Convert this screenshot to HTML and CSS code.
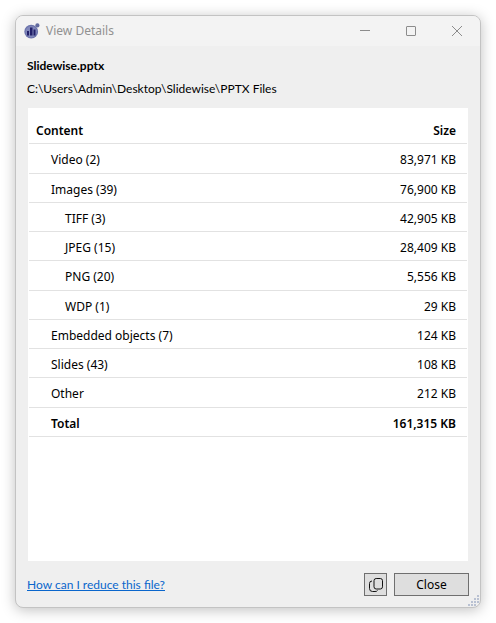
FILE: index.html
```html
<!DOCTYPE html>
<html lang="en">
<head>
  <meta charset="UTF-8" />
  <meta name="viewport" content="width=device-width, initial-scale=1.0"/>
  <title>View Details</title>
  <link rel="stylesheet" href="styles.css">
</head>
<body>

  <div class="window">

    <!-- Title Bar -->
    <header class="titlebar">
      <svg class="app-icon" width="16" height="16" viewBox="0 0 16 16">
        <circle cx="7.2" cy="8.7" r="6.9" fill="#6c74ac"/>
        <circle cx="7.2" cy="8.7" r="5.7" fill="#8087ba"/>
        <circle cx="13.4" cy="2.4" r="2.1" fill="#626b9f"/>
        <path d="M3 8h2v4.500h-2zM6 4.500h2.500v8h-2.500zM9.500 6.500h2v6h-2z" fill="#22206a"/>
      </svg>
      <h1>View Details</h1>
      <div class="window-buttons">
        <button type="button" aria-label="Minimize">
          <svg width="12" height="12" viewBox="0 0 12 12"><path d="M1 5.500h10"/></svg>
        </button>
        <button type="button" aria-label="Maximize">
          <svg width="12" height="12" viewBox="0 0 12 12"><rect x="1.500" y="1.500" width="9" height="9" rx="0.500"/></svg>
        </button>
        <button type="button" aria-label="Close window">
          <svg width="12" height="12" viewBox="0 0 12 12"><path d="M1 1l10 10M11 1L1 11"/></svg>
        </button>
      </div>
    </header>

    <!-- File Info -->
    <main class="content">
      <h2>Slidewise.pptx</h2>
      <p class="path">C:\Users\Admin\Desktop\Slidewise\PPTX Files</p>

      <!-- Size Table -->
      <div class="panel">
        <table>
          <thead>
            <tr><th scope="col">Content</th><th scope="col">Size</th></tr>
          </thead>
          <tbody>
            <tr class="level-1"><td>Video (2)</td><td>83,971 KB</td></tr>
            <tr class="level-1"><td>Images (39)</td><td>76,900 KB</td></tr>
            <tr class="level-2"><td>TIFF (3)</td><td>42,905 KB</td></tr>
            <tr class="level-2"><td>JPEG (15)</td><td>28,409 KB</td></tr>
            <tr class="level-2"><td>PNG (20)</td><td>5,556 KB</td></tr>
            <tr class="level-2"><td>WDP (1)</td><td>29 KB</td></tr>
            <tr class="level-1"><td>Embedded objects (7)</td><td>124 KB</td></tr>
            <tr class="level-1"><td>Slides (43)</td><td>108 KB</td></tr>
            <tr class="level-1"><td>Other</td><td>212 KB</td></tr>
            <tr class="level-1 total"><td>Total</td><td>161,315 KB</td></tr>
          </tbody>
        </table>
      </div>
    </main>

    <!-- Footer -->
    <footer class="footer">
      <a href="#">How can I reduce this file?</a>
      <button type="button" class="btn btn-copy" aria-label="Copy">
        <svg width="16" height="16" viewBox="0 0 16 16">
          <rect x="6" y="1.500" width="8.500" height="10.500" rx="2.200"/>
          <path d="M4 4Q1.500 4 1.500 6.500V11.500Q1.500 14.500 4.500 14.500H7Q9 14.500 9.500 13.500"/>
        </svg>
      </button>
      <button type="button" class="btn btn-close">Close</button>
    </footer>

    <svg class="grip" width="12" height="12" viewBox="0 0 12 12">
      <path d="M9 0h2v2h-2zM6 3h2v2h-2zM9 3h2v2h-2zM3 6h2v2h-2zM6 6h2v2h-2zM9 6h2v2h-2zM0 9h2v2h-2zM3 9h2v2h-2zM6 9h2v2h-2z"/>
    </svg>
  </div>

</body>
</html>
```

FILE: styles.css
```css
* {
  box-sizing: border-box;
  margin: 0;
  padding: 0;
}

body {
  display: flex;
  min-height: 100vh;
  padding: 15px;
  background: #fff;
  color: #000;
  font-family: "Noto Sans", "Open Sans", sans-serif;
  font-size: 12px;
  line-height: 16px;
}

button {
  font: inherit;
}

.window {
  position: relative;
  flex: 1;
  display: flex;
  flex-direction: column;
  background: #efefef;
  border: 1px solid #c3c3c3;
  border-radius: 8px;
  box-shadow: 0 2px 14px rgba(0, 0, 0, 0.25);
}

/* Title bar */
.titlebar {
  display: flex;
  align-items: center;
  height: 30px;
  padding-left: 8px;
  background: #f3f3f3;
  border-radius: 7px 7px 0 0;
}

.titlebar h1 {
  margin-left: 6px;
  font-size: 12px;
  font-weight: normal;
  color: #919191;
}

.window-buttons {
  display: flex;
  margin-left: auto;
}

.window-buttons button {
  display: flex;
  align-items: center;
  justify-content: center;
  width: 46px;
  height: 30px;
  background: none;
  border: none;
}

.window-buttons svg {
  fill: none;
  stroke: #8c8c8c;
}

/* Content */
.content {
  flex: 1;
  display: flex;
  flex-direction: column;
  padding: 12px 12px 0 11px;
}

.content h2,
.path,
.footer a {
  font-family: Lato, "Noto Sans", sans-serif;
  font-size: 12px;
}

.content h2 {
  font-weight: bold;
}

.path {
  margin: 7px 0 11px;
}

.panel {
  flex: 1;
  margin-left: 1px;
  padding: 8px 1px 0;
  background: #fff;
}

table {
  width: 100%;
  border-collapse: separate;
  border-spacing: 0;
}

th,
td {
  height: 29px;
  padding: 3px 11px 0 7px;
  border-bottom: 1px solid #e2e2e2;
  text-align: left;
}

th {
  height: 28px;
  font-weight: 600;
}

th:last-child,
td:last-child {
  text-align: right;
}

tbody tr:nth-child(4n+1) td {
  height: 30px;
}

.level-1 td:first-child {
  padding-left: 22px;
}

.level-2 td:first-child {
  padding-left: 36px;
}

.total td {
  font-weight: 600;
}

/* Footer */
.footer {
  display: flex;
  align-items: center;
  gap: 7px;
  padding: 12px 11px 11px;
}

.footer a {
  margin-right: auto;
  color: #0a66cc;
}

.btn {
  display: flex;
  align-items: center;
  justify-content: center;
  height: 23px;
  background: #dedede;
  border: 1px solid #6f6f6f;
}

.btn-copy {
  width: 23px;
}

.btn-copy svg {
  fill: none;
  stroke: #111;
}

.btn-close {
  width: 75px;
}

.grip {
  position: absolute;
  right: 0;
  bottom: 0;
  fill: #b9c1d2;
}
```
